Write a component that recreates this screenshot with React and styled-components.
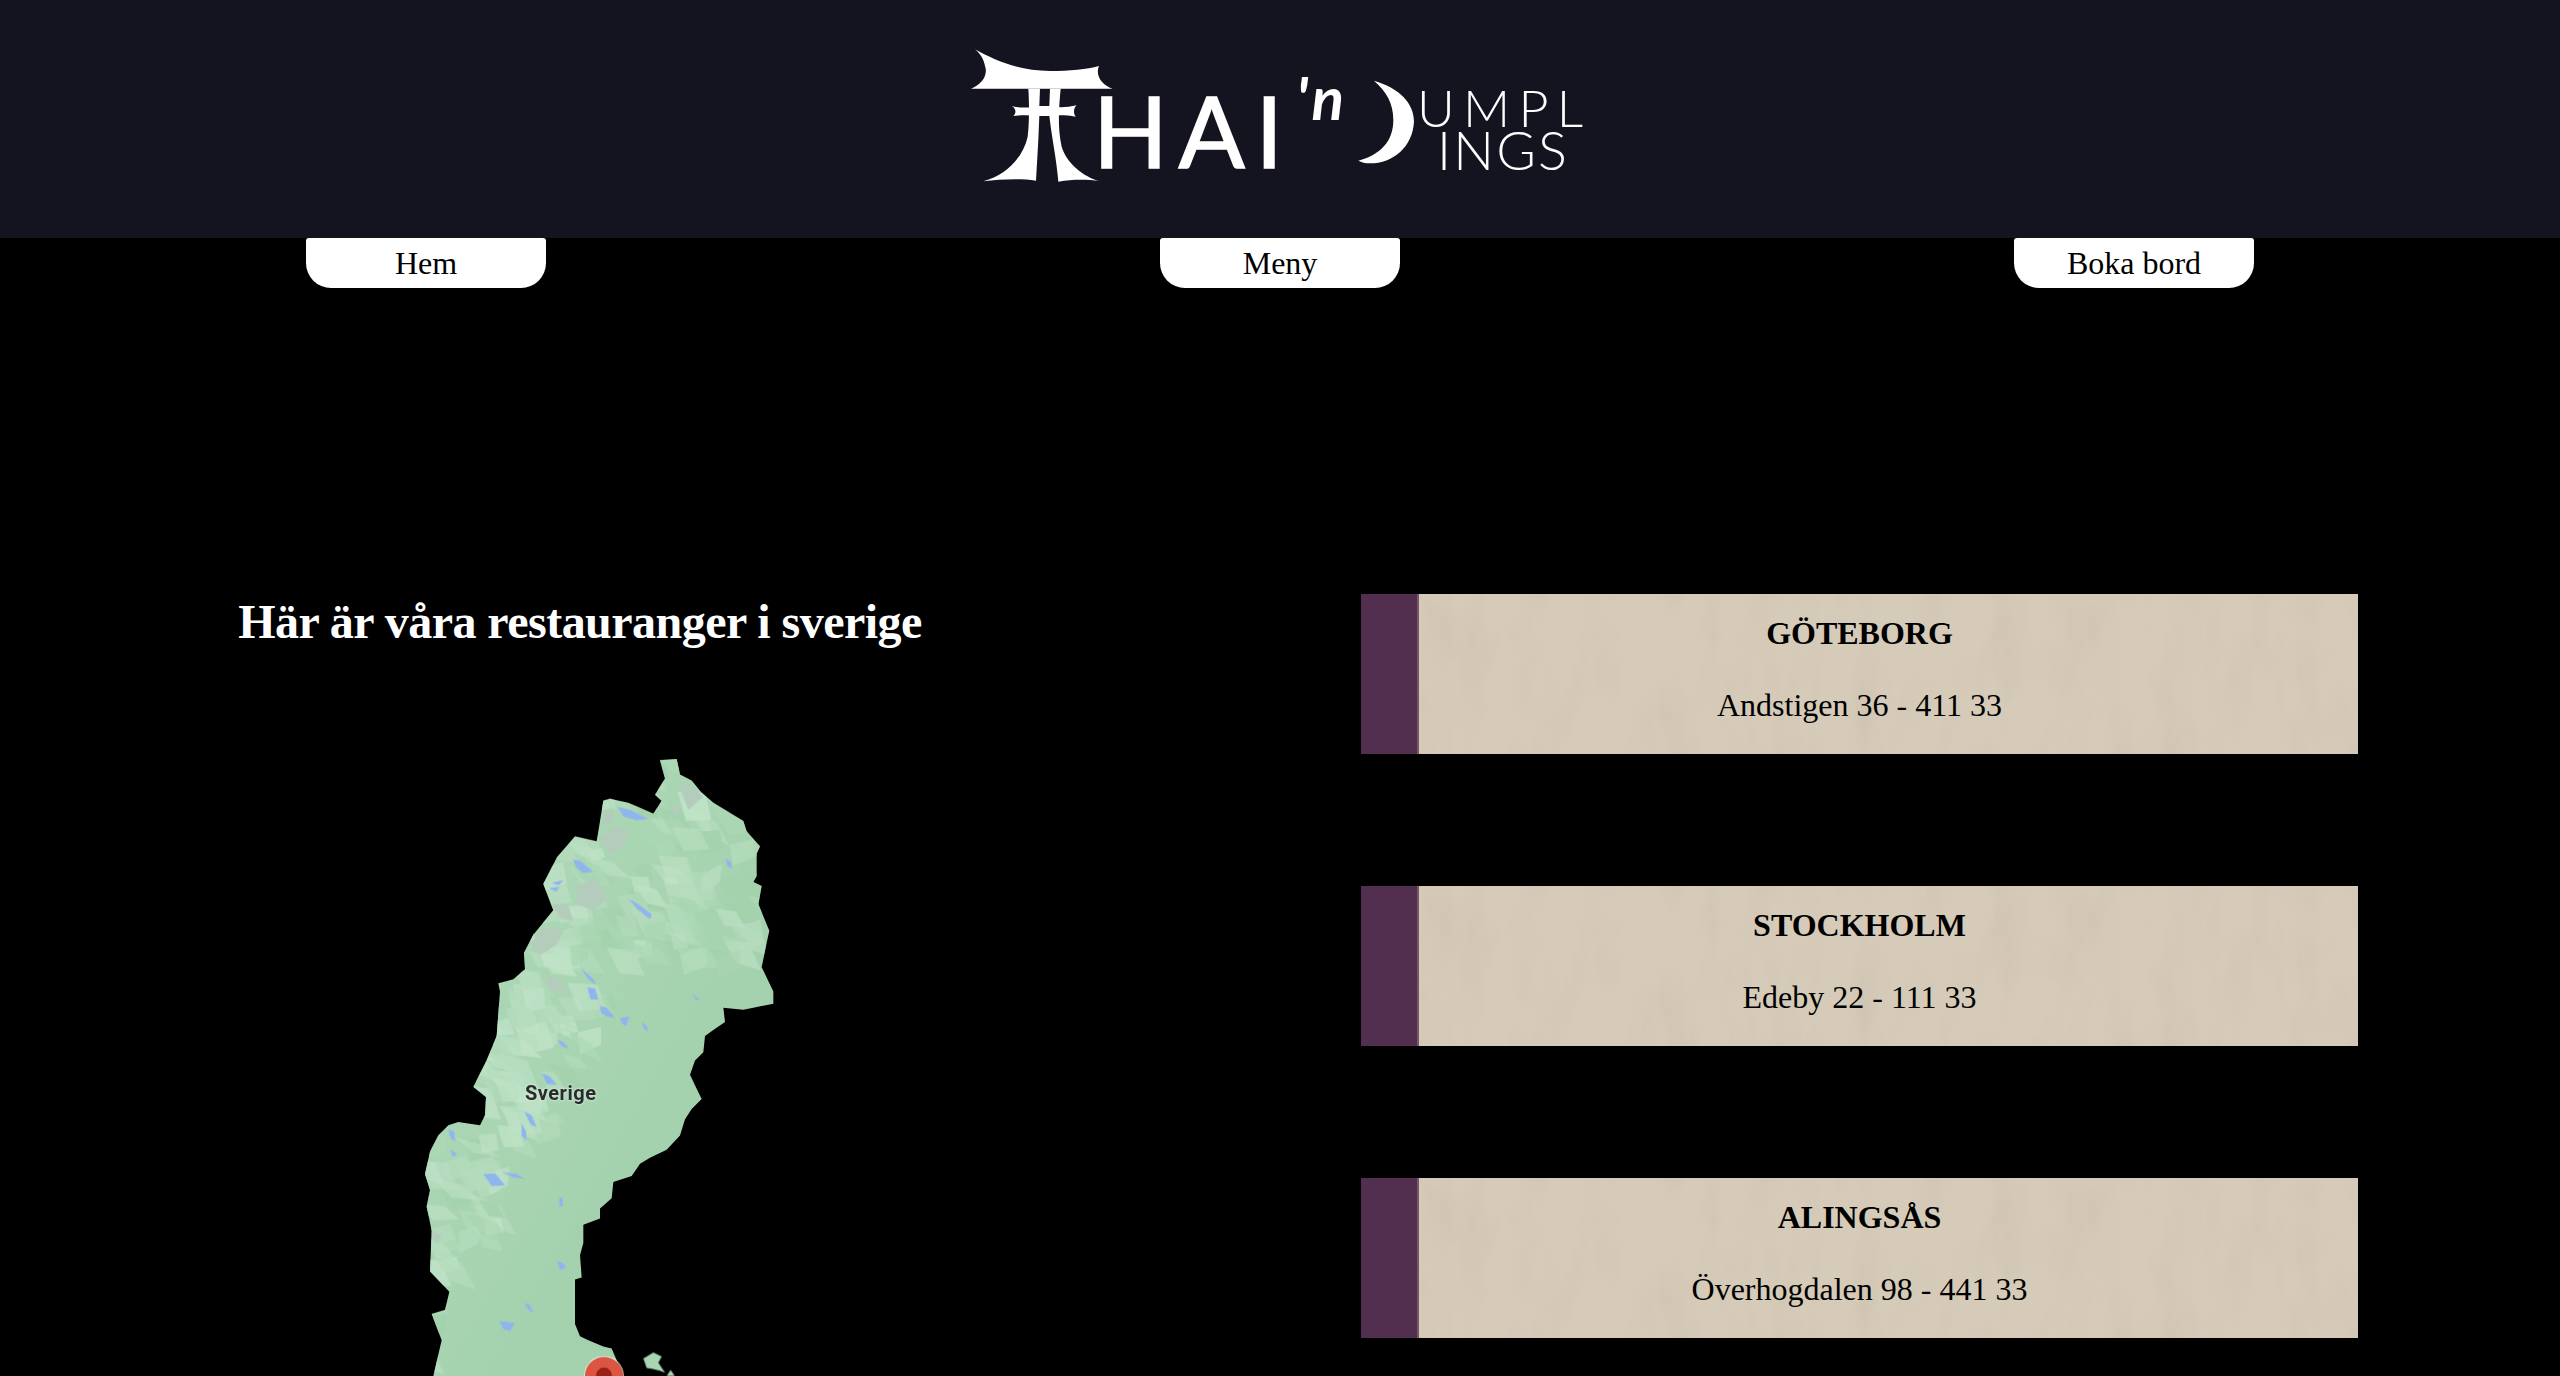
import React from "react";
import styled, { createGlobalStyle } from "styled-components";

const GlobalStyle = createGlobalStyle`
  html, body {
    margin: 0;
    padding: 0;
    background: #000;
  }
  body {
    font-family: "Liberation Serif", "Times New Roman", serif;
  }
`;

const Page = styled.div`
  height: 100vh;
  overflow: hidden;
  background: #000;
`;

const Header = styled.header`
  height: 238px;
  box-sizing: border-box;
  padding-top: 40px;
  display: flex;
  justify-content: center;
  background: #13141f;
`;

const LogoSvg = styled.svg`
  width: 640px;
  height: 150px;
  display: block;
`;

const LogoText = styled.text`
  font-family: "Lato", "Open Sans", sans-serif;
  fill: #fff;
`;

const Nav = styled.nav`
  display: flex;
  justify-content: center;
  gap: 614px;
`;

const NavButton = styled.a`
  width: 240px;
  height: 50px;
  display: flex;
  align-items: center;
  justify-content: center;
  background: #fff;
  color: #000;
  font-size: 32px;
  border-radius: 3px 3px 25px 25px;
`;

const Main = styled.main`
  display: flex;
  margin-top: 306px;
`;

const MapColumn = styled.section`
  width: 1160px;
  display: flex;
  flex-direction: column;
  align-items: center;
`;

const Title = styled.h1`
  margin: 0;
  color: #fff;
  font-size: 48px;
  line-height: 55px;
  font-weight: 700;
  letter-spacing: -0.53px;
`;

const MapWrap = styled.div`
  position: relative;
  width: 420px;
  height: 636px;
  margin-top: 91px;
  margin-left: 20px;
`;

const MapSvg = styled.svg`
  display: block;
  width: 420px;
  height: 636px;
`;

const MapLabel = styled.span`
  position: absolute;
  left: 145px;
  top: 340px;
  font-family: "Roboto", "Liberation Sans", sans-serif;
  font-size: 20px;
  line-height: 26px;
  font-weight: 700;
  letter-spacing: 0.5px;
  color: #2b2a2c;
  text-shadow: 0 0 3px #d5ecd9, 0 0 2px #d5ecd9;
`;

const CardColumn = styled.section`
  margin-left: 201px;
  width: 997px;
  display: flex;
  flex-direction: column;
  gap: 132px;
`;

const Card = styled.article`
  position: relative;
  height: 160px;
  box-sizing: border-box;
  padding-top: 21px;
  overflow: hidden;
  text-align: center;
  color: #000;
  background:
    linear-gradient(90deg, #522f4e 56px, #7a5668 56px, #7a5668 58px, transparent 58px),
    #d6cbb9;
`;

const PaperTexture = styled.svg`
  position: absolute;
  left: 58px;
  top: 0;
  width: 939px;
  height: 160px;
`;

const CardTitle = styled.h3`
  position: relative;
  margin: 0 0 35px;
  font-size: 32px;
  line-height: 37px;
  font-weight: 700;
`;

const CardAddress = styled.p`
  position: relative;
  margin: 0;
  font-size: 32px;
  line-height: 37px;
`;

const restaurants = [
  { city: "GÖTEBORG", address: "Andstigen 36 - 411 33" },
  { city: "STOCKHOLM", address: "Edeby 22 - 111 33" },
  { city: "ALINGSÅS", address: "Överhogdalen 98 - 441 33" },
];

const outline =
  "840,50 890,47 900,85 935,100 965,130 1000,155 1040,175 1090,200 1100,225 1140,262 1130,280 1130,335 1120,350 1145,360 1135,405 1168,470 1160,500 1145,560 1180,620 1180,650 1120,660 1090,665 1030,660 1035,695 1000,715 975,730 970,770 945,790 930,825 950,860 965,885 935,910 915,935 900,975 860,1010 810,1030 780,1045 755,1075 700,1090 695,1130 660,1155 660,1180 610,1195 610,1240 600,1270 605,1325 585,1330 585,1440 600,1470 625,1480 670,1495 695,1500 730,1568 160,1568 185,1480 155,1415 195,1405 208,1360 150,1310 155,1210 140,1150 150,1110 135,1070 150,1015 175,975 205,950 235,942 300,950 315,925 318,880 280,855 320,790 350,730 360,620 355,600 400,590 435,565 432,525 460,480 520,420 490,355 530,290 585,238 650,250 670,150 690,145 745,155 820,182 845,150 825,135 855,95";

const lakes = [
  "712,165 750,172 805,195 770,198 730,188",
  "578,295 600,298 640,325 610,328 590,315",
  "515,352 552,345 535,358",
  "508,365 538,362 528,374",
  "745,390 775,405 815,430 810,442 770,415",
  "622,610 645,612 655,640 632,640",
  "660,655 680,660 705,685 680,682 662,672",
  "720,685 748,682 738,706 725,698",
  "785,695 800,705 805,720 792,712",
  "532,740 550,745 568,762 545,755",
  "485,822 510,830 530,850 500,848",
  "432,915 455,925 470,955 452,948",
  "425,945 438,965 440,988 425,975",
  "205,960 222,965 226,990 212,982",
  "210,1010 232,1020 218,1028",
  "310,1070 345,1068 375,1098 335,1100",
  "365,1065 410,1070 435,1082 400,1078",
  "538,1128 548,1128 548,1150 538,1150",
  "532,1285 550,1290 560,1302 540,1306",
  "432,1388 448,1392 462,1412 445,1405",
  "358,1432 405,1438 390,1458 370,1452",
  "1036,292 1052,300 1056,318 1042,310",
  "938,626 958,640 948,642",
  "600,560 640,590 650,605 625,590",
];

const rocks = [
  "660,240 705,215 750,222 725,265 700,285 668,262",
  "590,360 650,340 680,395 640,420 590,405",
  "515,405 565,408 580,445 540,440",
  "450,505 490,462 550,470 530,505 480,530",
  "500,585 540,590 560,620 510,618",
  "900,100 945,120 970,140 925,172 905,130",
  "870,165 905,165 892,188",
  "670,175 700,170 695,205 672,210",
  "155,1210 185,1222 175,1242 158,1232",
];

// patches of lighter and darker forest, same seed on each render
const makePatches = () => {
  let seed = 4711;
  const rnd = () => {
    seed = (seed * 16807) % 2147483647;
    return seed / 2147483647;
  };
  const light = ["#bfe2c7", "#b9dfc2", "#c3e4ca", "#b4dcbd"];
  const dark = ["#a8d5b1", "#a2d1ab", "#add8b6"];
  const list = [];
  for (let i = 0; i < 560; i++) {
    const x = 130 + rnd() * 1060;
    const y = 40 + rnd() * 1530;
    // the south east is flat and has no patches
    const east = 1130 - (y - 50) * 0.62;
    if (y > 1000 && x > 400 - (y - 1000) * 0.12) continue;
    if (x > east - 60 && y > 560) continue;
    const west = x < 620 - (y - 500) * 0.35;
    const c = rnd() < (west ? 0.78 : 0.45) ? light : dark;
    const w = 24 + rnd() * 52;
    const h = 14 + rnd() * 26;
    const tilt = 0.3 + rnd() * 0.5;
    const a = [x - w, y - w * tilt];
    const b = [x + h * 0.9, y - h + rnd() * 10];
    const d = [x + w, y + w * tilt];
    const e = [x - h * 0.7, y + h];
    list.push({
      points: [a, b, d, e].map((p) => p.map((n) => n.toFixed(0)).join(",")).join(" "),
      fill: c[Math.floor(rnd() * c.length)],
      opacity: 0.4 + rnd() * 0.4,
    });
  }
  return list;
};

const patches = makePatches();

const Logo = () => (
  <LogoSvg viewBox="0 0 640 150" role="img" aria-label="Thai 'n Dumplings">
    {/* torii gate */}
    <g transform="scale(0.3333)" fill="#fff">
      <path d="M45 28C100 58 170 92 270 93C330 93 380 88 417 78C405 105 425 135 458 146L33 146C65 135 85 105 75 78C72 60 62 42 45 28Z" />
      <path d="M205 146L240 146L238 198L238 228L235 300L228 422C180 415 120 418 70 424C140 405 190 350 203 290C208 250 208 190 205 146Z" />
      <path d="M270 146L302 146C297 200 292 260 305 320C320 370 370 410 420 424C380 418 340 418 295 425C290 360 275 290 268 228L268 198Z" />
      <path d="M155 198C180 205 220 203 238 198L268 198C290 203 320 203 350 196C340 205 340 220 347 230C320 225 290 225 268 228L238 228C210 225 185 225 160 228C170 218 168 205 155 198Z" />
    </g>
    <LogoText x="133" y="128" fontSize="98" textLength="190" stroke="#fff" strokeWidth="1.5">HAI</LogoText>
    <LogoText x="336" y="80" fontSize="60" fontStyle="italic" fontWeight="700" textLength="48">'n</LogoText>
    {/* crescent */}
    <path
      transform="translate(310 13.33) scale(0.3333)"
      fill="#fff"
      d="M312 82C390 105 432 150 432 205C428 280 370 330 300 330C285 330 275 327 265 322C330 305 370 265 370 200C370 150 350 115 312 82Z"
    />
    <LogoText x="457" y="87" fontSize="52" fontWeight="300" textLength="166">UMPL</LogoText>
    <LogoText x="477" y="130" fontSize="54" fontWeight="300" textLength="130">INGS</LogoText>
  </LogoSvg>
);

const SwedenMap = () => (
  <MapWrap>
    <MapSvg viewBox="0 0 1260 1568" preserveAspectRatio="none">
      <defs>
        <clipPath id="sweden">
          <polygon points={outline} />
        </clipPath>
        <linearGradient id="land" x1="0" y1="0" x2="1" y2="1">
          <stop offset="0" stopColor="#b2dabb" />
          <stop offset="0.6" stopColor="#a5d2ae" />
          <stop offset="1" stopColor="#a2d0ab" />
        </linearGradient>
        <filter id="soft">
          <feGaussianBlur stdDeviation="1.6" />
        </filter>
      </defs>
      <polygon points={outline} fill="url(#land)" />
      <g clipPath="url(#sweden)">
        <g filter="url(#soft)">
          {patches.map((p, i) => (
            <polygon key={i} points={p.points} fill={p.fill} opacity={p.opacity} />
          ))}
          {rocks.map((p) => (
            <polygon key={p} points={p} fill="#b4ccbc" />
          ))}
          {lakes.map((p) => (
            <polygon key={p} points={p} fill="#8fb5ee" />
          ))}
        </g>
      </g>
      <polygon points="790,1525 820,1510 845,1520 835,1535 855,1560 840,1555 815,1550 800,1548" fill="#a9d6b2" />
      <polygon points="860,1568 872,1553 884,1568" fill="#a9d6b2" />
      <ellipse cx="672" cy="1568" rx="60" ry="50" fill="#e8f0e8" opacity="0.7" />
      <ellipse cx="672" cy="1568" rx="57" ry="47" fill="#dc5442" />
      <ellipse cx="672" cy="1568" rx="24" ry="21" fill="#9a1f16" />
    </MapSvg>
    <MapLabel>Sverige</MapLabel>
  </MapWrap>
);

const App = () => {
  return (
    <Page>
      <GlobalStyle />
      <Header>
        <Logo />
      </Header>
      <Nav>
        <NavButton>Hem</NavButton>
        <NavButton>Meny</NavButton>
        <NavButton>Boka bord</NavButton>
      </Nav>
      <Main>
        <MapColumn>
          <Title>Här är våra restauranger i sverige</Title>
          <SwedenMap />
        </MapColumn>
        <CardColumn>
          {restaurants.map((r) => (
            <Card key={r.city}>
              <PaperTexture viewBox="0 0 939 160" aria-hidden="true">
                <filter id="paper" x="0" y="0" width="100%" height="100%">
                  <feTurbulence type="fractalNoise" baseFrequency="0.03 0.01" numOctaves="5" seed="8" />
                  <feColorMatrix values="0 0 0 0 0.45  0 0 0 0 0.39  0 0 0 0 0.3  1.6 0 0 0 -0.7" />
                </filter>
                <rect width="939" height="160" filter="url(#paper)" opacity="0.22" />
              </PaperTexture>
              <CardTitle>{r.city}</CardTitle>
              <CardAddress>{r.address}</CardAddress>
            </Card>
          ))}
        </CardColumn>
      </Main>
    </Page>
  );
};

export default App;
